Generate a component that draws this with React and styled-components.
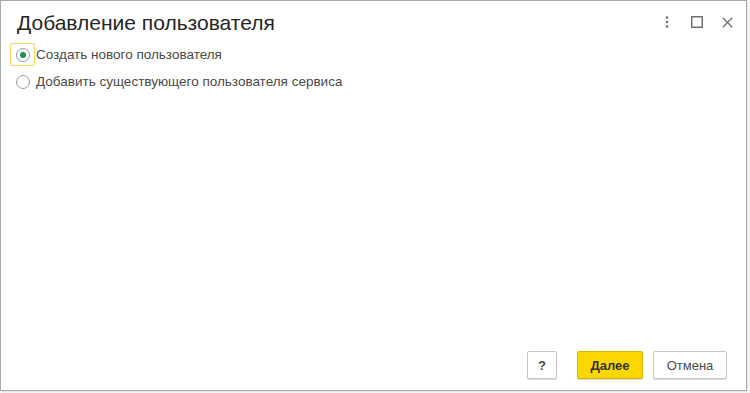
import React from "react";
import styled, { createGlobalStyle } from "styled-components";

const Global = createGlobalStyle`
  html, body { margin: 0; padding: 0; }
  body {
    width: 750px;
    height: 393px;
    overflow: hidden;
    background: #ececec;
    font-family: Arial, "Liberation Sans", sans-serif;
  }
`;

const Screen = styled.div`
  width: 750px;
  height: 393px;
  display: flex;
  align-items: flex-start;
  background: linear-gradient(to right, #ffffff 0 746px, #f6f6f6 746px);
`;

const Window = styled.div`
  box-sizing: border-box;
  width: 747px;
  height: 391px;
  border: 1px solid #a9a9a9;
  background: #fff;
  display: flex;
  flex-direction: column;
  box-shadow: 0 1px 2px rgba(0, 0, 0, 0.15);
`;

const Header = styled.div`
  height: 40px;
  display: flex;
  align-items: center;
  padding: 2px 4px 0 16px;
  box-sizing: border-box;
`;

const Title = styled.h1`
  flex: 1;
  margin: 0;
  font-size: 21px;
  font-weight: normal;
  color: #262626;
  padding-top: 1px;
`;

const IconButton = styled.button`
  width: 30px;
  height: 26px;
  border: 0;
  background: transparent;
  padding: 0;
  display: flex;
  align-items: center;
  justify-content: center;
  color: #707070;
`;

const Body = styled.div`
  flex: 1;
  display: flex;
  flex-direction: column;
  padding: 0 0 0 9px;
`;

const RadioRow = styled.label`
  display: flex;
  align-items: center;
  height: 27px;
  font-size: 13.5px;
  color: #4a4a4a;
  cursor: default;
`;

const RadioFrame = styled.span`
  box-sizing: border-box;
  width: 25px;
  height: 23px;
  display: flex;
  align-items: center;
  justify-content: center;
  border: 1px solid ${(p) => (p.$focused ? "#f2d467" : "transparent")};
  border-radius: 2px;
  margin-right: 1px;
`;

const RadioCircle = styled.span`
  box-sizing: border-box;
  width: 14px;
  height: 14px;
  border-radius: 50%;
  border: 1px solid #9a9a9a;
  background: #fff;
  display: flex;
  align-items: center;
  justify-content: center;
  &::after {
    content: "";
    width: 6px;
    height: 6px;
    border-radius: 50%;
    background: ${(p) => (p.$checked ? "#1d8f4e" : "transparent")};
  }
`;

const Footer = styled.div`
  display: flex;
  justify-content: flex-end;
  align-items: center;
  padding: 0 19px 11px 0;
`;

const Button = styled.button`
  box-sizing: border-box;
  height: 28px;
  min-width: ${(p) => p.$w}px;
  margin-left: ${(p) => p.$gap}px;
  padding: 0 10px;
  border: 1px solid ${(p) => (p.$primary ? "#d9b300" : "#c6c6c6")};
  border-radius: 2px;
  background: ${(p) => (p.$primary ? "#fcd800" : "#fff")};
  box-shadow: 0 1px 1px rgba(0, 0, 0, 0.15);
  font-family: Arial, "Liberation Sans", sans-serif;
  font-size: 13px;
  font-weight: ${(p) => (p.$bold ? "bold" : "normal")};
  color: ${(p) => (p.$primary ? "#333" : "#4a4a4a")};
`;

export default function App() {
  return (
    <>
      <Global />
      <Screen>
        <Window>
          <Header>
            <Title>Добавление пользователя</Title>
            <IconButton aria-label="more">
              <svg width="4" height="12" viewBox="0 0 4 12">
                <circle cx="2" cy="1.5" r="1.3" fill="#6f6f6f" />
                <circle cx="2" cy="6" r="1.3" fill="#6f6f6f" />
                <circle cx="2" cy="10.5" r="1.3" fill="#6f6f6f" />
              </svg>
            </IconButton>
            <IconButton aria-label="maximize">
              <svg width="12" height="12" viewBox="0 0 12 12">
                <rect x="0.75" y="0.75" width="10.5" height="10.5" fill="none" stroke="#707070" strokeWidth="1.5" />
              </svg>
            </IconButton>
            <IconButton aria-label="close">
              <svg width="11" height="11" viewBox="0 0 11 11">
                <path d="M0.8 0.8 L10.2 10.2 M10.2 0.8 L0.8 10.2" stroke="#707070" strokeWidth="1.3" />
              </svg>
            </IconButton>
          </Header>
          <Body>
            <RadioRow>
              <RadioFrame $focused>
                <RadioCircle $checked />
              </RadioFrame>
              Создать нового пользователя
            </RadioRow>
            <RadioRow>
              <RadioFrame>
                <RadioCircle />
              </RadioFrame>
              Добавить существующего пользователя сервиса
            </RadioRow>
          </Body>
          <Footer>
            <Button $w={30} $gap={0} $bold>?</Button>
            <Button $w={66} $gap={20} $primary $bold>Далее</Button>
            <Button $w={74} $gap={10}>Отмена</Button>
          </Footer>
        </Window>
      </Screen>
    </>
  );
}
